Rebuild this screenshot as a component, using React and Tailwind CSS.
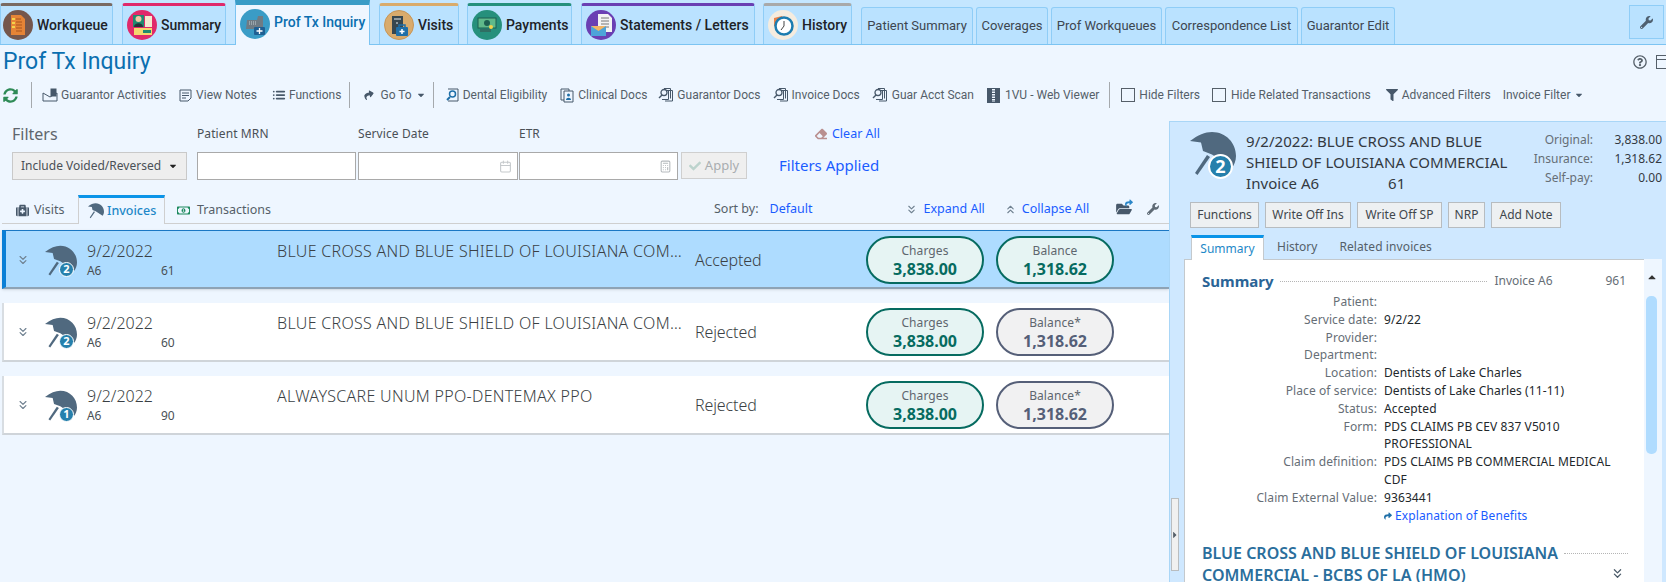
import { FaWrench, FaFilter, FaCaretDown, FaCaretUp, FaCaretRight, FaMedkit, FaRegMoneyBillAlt, FaCheck, FaRegQuestionCircle, FaShare, FaEraser, FaFolderOpen, FaSyncAlt } from 'react-icons/fa';
import { FiList } from 'react-icons/fi';
import { LuChevronsDown, LuChevronsUp, LuCalendar, LuCalculator } from 'react-icons/lu';

const segoe = "font-['Noto_Sans',sans-serif]";

const mainTabs = [
    { label: 'Workqueue', w: 'w-[113px]', ml: 'ml-0', pl: 'pl-[2px]', bar: 'border-t-[#7a6a62]', icon: 'wq' },
    { label: 'Summary', w: 'w-[104px]', ml: 'ml-[9px]', pl: 'pl-[4px]', bar: 'border-t-[#e0296b]', icon: 'sum' },
    { label: 'Visits', w: 'w-[80px]', ml: 'ml-[9px]', pl: 'pl-[4px]', bar: 'border-t-[#d9ab6c]', icon: 'vis' },
    { label: 'Payments', w: 'w-[105px]', ml: 'ml-[8px]', pl: 'pl-[4px]', bar: 'border-t-[#26907c]', icon: 'pay' },
    { label: 'Statements / Letters', w: 'w-[174px]', ml: 'ml-[9px]', pl: 'pl-[4px]', bar: 'border-t-[#6a3fb3]', icon: 'stm' },
    { label: 'History', w: 'w-[89px]', ml: 'ml-[8px]', pl: 'pl-[4px]', bar: 'border-t-[#a9a9a9]', icon: 'his' },
];

const subTabs = [
    { label: 'Patient Summary', w: 'w-[112px]' },
    { label: 'Coverages', w: 'w-[72px]' },
    { label: 'Prof Workqueues', w: 'w-[111px]' },
    { label: 'Correspondence List', w: 'w-[133px]' },
    { label: 'Guarantor Edit', w: 'w-[94px]' },
];

const details = [
    ['Patient:', ''],
    ['Service date:', '9/2/22'],
    ['Provider:', ''],
    ['Department:', ''],
    ['Location:', 'Dentists of Lake Charles'],
    ['Place of service:', 'Dentists of Lake Charles (11-11)'],
    ['Status:', 'Accepted'],
    ['Form:', 'PDS CLAIMS PB CEV 837 V5010 PROFESSIONAL'],
    ['Claim definition:', 'PDS CLAIMS PB COMMERCIAL MEDICAL CDF'],
    ['Claim External Value:', '9363441'],
];

const rows = [
    { num: '61', badge: '2', title: 'BLUE CROSS AND BLUE SHIELD OF LOUISIANA COMMERCIAL - BCBS OF LA (HMO)', status: 'Accepted', selected: true, balance: 'Balance' },
    { num: '60', badge: '2', title: 'BLUE CROSS AND BLUE SHIELD OF LOUISIANA COMMERCIAL - BCBS OF LA (HMO)', status: 'Rejected', balance: 'Balance*' },
    { num: '90', badge: '1', title: 'ALWAYSCARE UNUM PPO-DENTEMAX PPO', status: 'Rejected', balance: 'Balance*' },
];

const TabIcon = ({ kind }) => {
    if (kind === 'wq') return (
        <svg viewBox="0 0 30 30" className="w-[30px] h-[30px] shrink-0">
            <circle cx="15" cy="15" r="15" fill="#75574c" />
            <path d="M8 5h10l4 4v16H8z" fill="#e58436" />
            <path d="M13 9h5M13 12h6M13 15h6M13 18h6M13 21h6" stroke="#a8551c" strokeWidth="1" />
            <path d="M9 8h3v2H9zM9 12h3v2H9zM9 16h3v2H9z" fill="#f4d24a" />
        </svg>
    );
    if (kind === 'sum') return (
        <svg viewBox="0 0 30 30" className="w-[30px] h-[30px] shrink-0">
            <circle cx="15" cy="15" r="15" fill="#e0296b" />
            <rect x="6" y="5" width="11" height="12" fill="#1f8a70" />
            <circle cx="11.500" cy="9" r="3" fill="#f1c9a5" />
            <path d="M7 17c0-5 9-5 9 0z" fill="#263238" />
            <rect x="18" y="6" width="7" height="11" fill="#f4e9d0" />
            <rect x="7" y="18" width="18" height="7" fill="#f5d76e" />
            <rect x="16" y="20" width="8" height="3" fill="#1f8a70" />
        </svg>
    );
    if (kind === 'vis') return (
        <svg viewBox="0 0 30 30" className="w-[30px] h-[30px] shrink-0">
            <circle cx="15" cy="15" r="14.500" fill="#d9ab6c" stroke="#c79557" />
            <rect x="8" y="6" width="11" height="18" fill="#37474f" />
            <path d="M10 9h7M12 13h2" stroke="#eceff1" strokeWidth="1" />
            <rect x="12" y="17" width="12" height="9" rx="1" fill="#1f6fa8" />
            <path d="M15 17v-2h6v2" fill="none" stroke="#1f6fa8" strokeWidth="1.500" />
            <path d="M18 19v5M15.500 21.500h5" stroke="#fff" strokeWidth="1.500" />
        </svg>
    );
    if (kind === 'pay') return (
        <svg viewBox="0 0 30 30" className="w-[30px] h-[30px] shrink-0">
            <circle cx="15" cy="15" r="15" fill="#26907c" />
            <rect x="6" y="8" width="18" height="10" fill="#5fb98a" stroke="#1d5f50" />
            <circle cx="15" cy="13" r="3" fill="#1d5f50" />
            <rect x="8" y="19" width="11" height="3" fill="#2f6f63" />
            <circle cx="19" cy="17" r="2" fill="#f4d24a" />
        </svg>
    );
    if (kind === 'stm') return (
        <svg viewBox="0 0 30 30" className="w-[30px] h-[30px] shrink-0">
            <circle cx="15" cy="15" r="15" fill="#6a3fb3" />
            <path d="M12 4h10l4 4v14H12z" fill="#f3f3f3" />
            <path d="M15 8h8M15 11h8M15 14h8M15 17h8" stroke="#777" strokeWidth="1" />
            <rect x="5" y="16" width="15" height="10" fill="#4da3d9" />
            <path d="M5 16l7.500 5 7.500-5z" fill="#f3b565" />
        </svg>
    );
    if (kind === 'his') return (
        <svg viewBox="0 0 30 30" className="w-[30px] h-[30px] shrink-0">
            <circle cx="15" cy="15" r="15" fill="#f5ecdf" />
            <path d="M6 8l8-2 2 3-5 2v5H6z" fill="#e8824a" />
            <circle cx="16" cy="16" r="8.500" fill="#fff" stroke="#1c7cb0" strokeWidth="2.500" />
            <path d="M16 11v5l-3 4" fill="none" stroke="#444" strokeWidth="1" />
        </svg>
    );
    return (
        <svg viewBox="0 0 30 30" className="w-[30px] h-[30px] shrink-0">
            <circle cx="15" cy="15" r="15" fill="#3a9cc6" />
            <path d="M7 11h10l1-4h5v13H6z" fill="#6f7b84" />
            <path d="M9 13h7M9 15h7" stroke="#c6ced3" strokeWidth="1" strokeDasharray="1 1" />
            <rect x="14" y="18" width="11" height="8" rx="1" fill="#1f5f93" />
            <path d="M19.500 19v6M16.500 22h6" stroke="#fff" strokeWidth="1.300" />
        </svg>
    );
};

const UmbrellaShape = () => (
    <svg viewBox="0 0 46 46" className="w-full h-full">
        <path d="M0 10C8 4 15 1 22 1c14 0 24 11 24 24 0 5-2 9-4 12L22 23.500 13 20 11 11.500z" fill="#50697f" />
        <path d="M17 24L5 42l2.500 2L20 26z" fill="#50697f" />
    </svg>
);

const Umbrella = ({ badge, big }) => (
    <div className={big ? 'relative w-[46px] h-[46px] shrink-0' : 'relative w-[32px] h-[32px] shrink-0'}>
        <UmbrellaShape />
        <span className={big
            ? "absolute right-[3px] bottom-[-2px] w-[25px] h-[25px] rounded-full bg-[#2680ac] border-2 border-white text-white text-[18px] font-bold flex items-center justify-center font-['Noto_Sans',sans-serif]"
            : "absolute right-[3px] bottom-[0px] w-[15px] h-[15px] rounded-full bg-[#2680ac] border border-white text-white text-[11px] font-bold flex items-center justify-center font-['Noto_Sans',sans-serif]"}>
            {badge}
        </span>
    </div>
);

const DocSearch = () => (
    <svg viewBox="0 0 16 16" className="w-[16px] h-[16px] shrink-0" fill="none" stroke="#47586a" strokeWidth="1">
        <path d="M6 1.500h6.500v10M8 3.500h6.500V14H7" />
        <path d="M10.500 3v9.500H4" />
        <circle cx="6" cy="5.500" r="3" strokeWidth="1.300" />
        <path d="M4 8L1 11" strokeWidth="1.500" />
    </svg>
);

const ToolItem = ({ icon, children, className }) => (
    <div className={`flex items-center text-[12px] text-[#555f69] whitespace-nowrap ${className}`}>
        {icon}
        {children}
    </div>
);

const Sep = ({ className }) => <div className={`w-px h-[26px] bg-[#a5a9ad] ${className}`}></div>;

const Pill = ({ label, value, tone }) => (
    <div className={tone === 'green'
        ? 'w-[118px] h-[48px] rounded-[24px] border-2 border-[#066b60] bg-[#e6f4f3] flex flex-col items-center justify-center pt-[1px]'
        : 'w-[118px] h-[48px] rounded-[24px] border-2 border-[#555f78] bg-[#f1f1f2] flex flex-col items-center justify-center pt-[1px]'}>
        <span className="text-[12px] leading-[17px] text-[#5e666e] tracking-[0.1px]">{label}</span>
        <span className={tone === 'green'
            ? 'text-[16px] leading-[20px] font-bold text-[#066b60]'
            : 'text-[16px] leading-[20px] font-bold text-[#555f78]'}>{value}</span>
    </div>
);

const Row = ({ row }) => (
    <div className={row.selected
        ? 'h-[59px] flex bg-[#aedcff] border-l-[4px] border-l-[#0a7fd6] border-t border-t-[#1b78c4] border-b-[2px] border-b-[#8ea3b5] shadow-sm'
        : 'h-[59px] flex bg-white border-l-[2px] pl-[2px] border-l-[#d8dde2] border-b-[2px] border-b-[#cfd4d9]'}>
        <LuChevronsDown className="text-[#6f8090] w-[14px] h-[14px] ml-[10px] mt-[22px] shrink-0" />
        <div className="ml-[15px] mt-[14px] shrink-0"><Umbrella badge={row.badge} /></div>
        <div className="ml-[10px] w-[190px] shrink-0 pt-[9px]">
            <div className="text-[16px] leading-[22px] text-[#3a3f44] font-light">9/2/2022</div>
            <div className="flex text-[12px] leading-[16px] mt-[1px] text-[#4a5056] tracking-[-0.2px]">
                <span className="w-[74px]">A6</span><span>{row.num}</span>
            </div>
        </div>
        <div className="w-[414px] shrink-0 pt-[9px] text-[16px] leading-[22px] text-[#3a3f44] truncate tracking-[0.3px] font-light">{row.title}</div>
        <div className="w-[171px] shrink-0 ml-[4px] pt-[18px] text-[16px] leading-[22px] text-[#3a3f44] tracking-[-0.1px] font-light">{row.status}</div>
        <div className="flex gap-[12px] pt-[5px]">
            <Pill label="Charges" value="3,838.00" tone="green" />
            <Pill label={row.balance} value="1,318.62" tone={row.selected ? 'green' : 'gray'} />
        </div>
    </div>
);

const App = () => {
    return (
        <div className="w-[1666px] h-[582px] overflow-hidden bg-[#eef6ff] flex flex-col font-['Roboto',sans-serif]">
            {/* top tabs */}
            <div className="h-[45px] shrink-0 bg-[#c4e6ff] border-b border-b-[#7cc4f2] flex items-end relative">
                {mainTabs.slice(0, 2).map((t) => (
                    <div key={t.label} className={`${t.w} ${t.ml} ${t.pl} h-[41px] bg-[#bae2ff] border-t-[3px] ${t.bar} border-x border-x-[#8fcdf7] rounded-t-[3px] flex items-center gap-[4px] text-[14px] font-medium text-[#1e2328] whitespace-nowrap`}>
                        <TabIcon kind={t.icon} />{t.label}
                    </div>
                ))}
                <div className="w-[135px] ml-[9px] h-[45px] mb-[-1px] bg-[#eef6ff] border-t-[5px] border-t-[#3a9cc6] border-x border-x-[#7cc4f2] flex items-start pt-[4px] pl-[4px] gap-[4px] text-[14px] font-medium text-[#0b6fb0] whitespace-nowrap">
                    <TabIcon kind="prof" /><span className="mt-[3px]">Prof Tx Inquiry</span>
                </div>
                {mainTabs.slice(2).map((t) => (
                    <div key={t.label} className={`${t.w} ${t.ml} ${t.pl} h-[41px] bg-[#bae2ff] border-t-[3px] ${t.bar} border-x border-x-[#8fcdf7] rounded-t-[3px] flex items-center gap-[4px] text-[14px] font-medium text-[#1e2328] whitespace-nowrap`}>
                        <TabIcon kind={t.icon} />{t.label}
                    </div>
                ))}
                <div className="flex ml-[9px] gap-[3px]">
                    {subTabs.map((t) => (
                        <div key={t.label} className={`${t.w} h-[37px] bg-[#bae2ff] border-x border-t border-[#8fcdf7] rounded-t-[3px] flex items-center justify-center text-[13px] text-[#3d4650] whitespace-nowrap`}>
                            {t.label}
                        </div>
                    ))}
                </div>
                <div className="absolute right-[2px] top-[5px] w-[35px] h-[34px] bg-[#bae2ff] border border-[#8fcdf7] flex items-center justify-center">
                    <FaWrench className="w-[13px] h-[13px] text-[#4f6070]" />
                </div>
            </div>

            {/* title */}
            <div className="h-[33px] shrink-0 flex items-center pl-[3px] pt-[1px] overflow-hidden">
                <div className="text-[23px] text-[#0b6fb0]">Prof Tx Inquiry</div>
                <div className="ml-auto flex items-center gap-[9px] mr-[-4px]">
                    <FaRegQuestionCircle className="w-[14px] h-[14px] text-[#555f69]" />
                    <div className="w-[14px] h-[14px] border border-[#555f69] pt-[3px]"><div className="border-t border-t-[#555f69]"></div></div>
                </div>
            </div>

            {/* toolbar */}
            <div className="h-[34px] shrink-0 flex items-center">
                <FaSyncAlt className="w-[15px] h-[15px] ml-[3px] text-[#2e8b57]" />
                <Sep className="ml-[13px]" />
                <ToolItem className="ml-[10px]" icon={<svg viewBox="0 0 16 14" className="w-[16px] h-[14px] mr-[3px]" fill="none" stroke="#47586a"><path d="M1 5l7 4 7-4v8H1z" /><rect x="9" y="1" width="5" height="7" fill="#47586a" /></svg>}>Guarantor Activities</ToolItem>
                <ToolItem className="ml-[13px]" icon={<svg viewBox="0 0 13 13" className="w-[13px] h-[13px] mr-[4px]" fill="none" stroke="#47586a"><path d="M1 1h11v8l-3 3H1zM3 4h7M3 6.500h7M3 9h4" /></svg>}>View Notes</ToolItem>
                <ToolItem className="ml-[15px]" icon={<FiList className="w-[14px] h-[14px] mr-[3px] text-[#47586a] stroke-[3]" />}>Functions</ToolItem>
                <Sep className="ml-[8px]" />
                <ToolItem className="ml-[14px]" icon={<FaShare className="w-[10px] h-[10px] mr-[6px] text-[#47586a] -rotate-12" />}>Go To<FaCaretDown className="w-[10px] h-[10px] ml-[4px] text-[#47586a]" /></ToolItem>
                <Sep className="ml-[7px]" />
                <ToolItem className="ml-[11px]" icon={<svg viewBox="0 0 14 14" className="w-[14px] h-[14px] mr-[4px]" fill="none" stroke="#47586a"><path d="M3 1h10v12H3" /><circle cx="7.500" cy="6" r="3" stroke="#1f6fa8" strokeWidth="1.500" /><path d="M5 9l-3 3" stroke="#1f6fa8" strokeWidth="2" /></svg>}>Dental Eligibility</ToolItem>
                <ToolItem className="ml-[13px]" icon={<svg viewBox="0 0 14 15" className="w-[14px] h-[15px] mr-[4px]" fill="none" stroke="#47586a"><path d="M1 1h8v11H1z" /><path d="M4 3h9v11H4z" fill="#eef6ff" /><circle cx="8.500" cy="7" r="1.500" fill="#1f6fa8" stroke="none" /><path d="M6 12c0-3 5-3 5 0z" fill="#1f6fa8" stroke="none" /></svg>}>Clinical Docs</ToolItem>
                <ToolItem className="ml-[11px]" icon={<span className="mr-[3px]"><DocSearch /></span>}>Guarantor Docs</ToolItem>
                <ToolItem className="ml-[12px]" icon={<span className="mr-[3px]"><DocSearch /></span>}>Invoice Docs</ToolItem>
                <ToolItem className="ml-[12px]" icon={<span className="mr-[4px]"><DocSearch /></span>}>Guar Acct Scan</ToolItem>
                <ToolItem className="ml-[13px]" icon={<svg viewBox="0 0 13 15" className="w-[13px] h-[15px] mr-[5px]"><rect width="13" height="15" fill="#47586a" /><path d="M6.500 1v13" stroke="#eef6ff" strokeWidth="3" strokeDasharray="1.500 1" /></svg>}>1VU - Web Viewer</ToolItem>
                <Sep className="ml-[10px]" />
                <ToolItem className="ml-[11px]" icon={<span className="w-[14px] h-[14px] border border-[#555f69] mr-[4px]"></span>}>Hide Filters</ToolItem>
                <ToolItem className="ml-[12px]" icon={<span className="w-[14px] h-[14px] border border-[#555f69] mr-[5px]"></span>}>Hide Related Transactions</ToolItem>
                <ToolItem className="ml-[15px]" icon={<FaFilter className="w-[12px] h-[12px] mr-[4px] text-[#47586a]" />}>Advanced Filters</ToolItem>
                <ToolItem className="ml-[12px]" icon={null}>Invoice Filter<FaCaretDown className="w-[10px] h-[10px] ml-[4px] text-[#47586a]" /></ToolItem>
            </div>

            {/* main */}
            <div className={`flex-1 flex min-h-0 ${segoe}`}>
                <div className="w-[1169px] shrink-0 flex flex-col">
                    {/* filters */}
                    <div className="flex pl-[12px] pt-[11px]">
                        <div className="w-[175px] shrink-0">
                            <div className="h-[22px] flex items-center text-[16px] text-[#5f666d]">Filters</div>
                            <div className="mt-[7px] h-[28px] bg-[#eeeeee] border border-[#c9c9c9] flex items-center px-[8px] text-[12px] text-[#4a5056] whitespace-nowrap">
                                Include Voided/Reversed
                                <FaCaretDown className="w-[10px] h-[10px] ml-auto text-[#222]" />
                            </div>
                        </div>
                        <div className="w-[159px] ml-[10px] shrink-0">
                            <div className="h-[22px] flex items-center text-[12px] text-[#4a5056] tracking-[0.1px]">Patient MRN</div>
                            <div className="mt-[7px] h-[28px] bg-white border border-[#a9a9a9]"></div>
                        </div>
                        <div className="w-[160px] ml-[2px] shrink-0">
                            <div className="h-[22px] flex items-center text-[12px] text-[#4a5056] tracking-[0.1px]">Service Date</div>
                            <div className="mt-[7px] h-[28px] bg-white border border-[#a9a9a9] flex items-center justify-end pr-[5px]">
                                <LuCalendar className="w-[13px] h-[13px] text-[#c5c9cc]" />
                            </div>
                        </div>
                        <div className="w-[159px] ml-[1px] shrink-0">
                            <div className="h-[22px] flex items-center text-[12px] text-[#4a5056]">ETR</div>
                            <div className="mt-[7px] h-[28px] bg-white border border-[#a9a9a9] flex items-center justify-end pr-[5px]">
                                <LuCalculator className="w-[13px] h-[13px] text-[#b5babd]" />
                            </div>
                        </div>
                        <div className="w-[66px] ml-[3px] mt-[29px] h-[27px] bg-[#efefef] border border-[#cfcfcf] flex items-center justify-center gap-[4px] text-[13px] text-[#a9adb0] shrink-0">
                            <FaCheck className="w-[12px] h-[12px] text-[#bcd3cd]" /><span>Apply</span>
                        </div>
                        <div className="w-[101px] ml-[32px] shrink-0">
                            <div className="h-[22px] flex items-center justify-end gap-[5px] text-[12.5px] text-[#1a5cff]">
                                <FaEraser className="w-[12px] h-[12px] text-[#b98f8f]" />Clear All
                            </div>
                            <div className="mt-[10px] text-[15px] leading-[20px] text-[#1a5cff] whitespace-nowrap">Filters Applied</div>
                        </div>
                    </div>

                    {/* list tabs */}
                    <div className="mt-[15px] ml-[2px] h-[29px] shrink-0 flex items-stretch border-b border-b-[#cfcfcf]">
                        <div className="flex items-center pl-[13px] w-[76px] gap-[4px] text-[12.5px] text-[#555f69] pt-[2px]">
                            <FaMedkit className="w-[15px] h-[13px] text-[#47586a]" />Visits
                        </div>
                        <div className="w-[87px] mb-[-1px] bg-[#eef6ff] border-t-[3px] border-t-[#0a94e8] border-x border-x-[#cfcfcf] flex items-center pl-[9px] gap-[3px] text-[12.5px] font-medium text-[#1e88c8]">
                            <span className="w-[16px] h-[16px]"><UmbrellaShape /></span>Invoices
                        </div>
                        <div className="flex items-center pl-[12px] w-[120px] gap-[7px] text-[12.5px] text-[#555f69] whitespace-nowrap pt-[2px]">
                            <FaRegMoneyBillAlt className="w-[13px] h-[13px] text-[#1d8a5e]" />Transactions
                        </div>
                        <div className="flex items-center text-[12.5px] ml-[429px] whitespace-nowrap">
                            <span className="text-[#555f69]">Sort by:</span>
                            <span className="ml-[11px] text-[#1a5cff]">Default</span>
                            <LuChevronsDown className="ml-[93px] w-[13px] h-[13px] text-[#6f8090]" />
                            <span className="ml-[5px] text-[#1a5cff]">Expand All</span>
                            <LuChevronsUp className="ml-[19px] w-[13px] h-[13px] text-[#6f8090]" />
                            <span className="ml-[5px] text-[#1a5cff]">Collapse All</span>
                            <span className="ml-[27px] relative">
                                <FaFolderOpen className="w-[16px] h-[14px] text-[#47586a]" />
                                <FaShare className="absolute right-[-1px] top-[-3px] w-[8px] h-[8px] text-[#2a86c8]" />
                            </span>
                            <FaWrench className="ml-[15px] w-[12px] h-[12px] text-[#5f6b76]" />
                        </div>
                    </div>

                    {/* rows */}
                    <div className="ml-[2px] mt-[6px] flex flex-col gap-[14px]">
                        {rows.map((r) => <Row key={r.num} row={r} />)}
                    </div>
                </div>

                {/* detail panel */}
                <div className="mt-[9px] flex-1 min-w-0 bg-[#cfe8ff] border-t border-l border-[#a9d6f7] flex flex-col relative">
                    <div className="flex pl-[20px] pt-[9px]">
                        <Umbrella badge="2" big />
                        <div className="ml-[10px] w-[270px] text-[15px] leading-[21px] text-[#33393f] shrink-0 tracking-[0.05px]">
                            <div>9/2/2022: BLUE CROSS AND BLUE</div>
                            <div className="whitespace-nowrap">SHIELD OF LOUISIANA COMMERCIAL</div>
                            <div className="flex"><span className="w-[142px]">Invoice A6</span><span>61</span></div>
                        </div>
                        <div className="ml-auto mr-[4px] self-start text-[12px] leading-[19px] mt-[-1px] grid grid-cols-[auto_69px]">
                            <span className="text-right text-[#666e76]">Original:</span><span className="text-right text-[#33393f]">3,838.00</span>
                            <span className="text-right text-[#666e76]">Insurance:</span><span className="text-right text-[#33393f]">1,318.62</span>
                            <span className="text-right text-[#666e76]">Self-pay:</span><span className="text-right text-[#33393f]">0.00</span>
                        </div>
                    </div>
                    <div className="flex gap-[6px] pl-[20px] mt-[8px]">
                        <div className="w-[69px] h-[26px] bg-[#edf0f2] border border-[#b7bcc0] flex items-center justify-center text-[12px] text-[#40464c]">Functions</div>
                        <div className="w-[86px] h-[26px] bg-[#edf0f2] border border-[#b7bcc0] flex items-center justify-center text-[12px] text-[#40464c]">Write Off Ins</div>
                        <div className="w-[85px] h-[26px] bg-[#edf0f2] border border-[#b7bcc0] flex items-center justify-center text-[12px] text-[#40464c]">Write Off SP</div>
                        <div className="w-[37px] h-[26px] bg-[#edf0f2] border border-[#b7bcc0] flex items-center justify-center text-[12px] text-[#40464c]">NRP</div>
                        <div className="w-[70px] h-[26px] bg-[#edf0f2] border border-[#b7bcc0] flex items-center justify-center text-[12px] text-[#40464c]">Add Note</div>
                    </div>
                    <div className="flex pl-[21px] mt-[7px] h-[24px] text-[12px] shrink-0 relative z-10">
                        <div className="w-[73px] h-[25px] bg-white border-t-[3px] border-t-[#0a94e8] border-x border-x-[#c4c9cd] flex items-center justify-center text-[#1e88c8]">Summary</div>
                        <div className="ml-[13px] flex items-center text-[#555f69]">History</div>
                        <div className="ml-[22px] flex items-center text-[#555f69] tracking-[0.1px]">Related invoices</div>
                    </div>
                    <div className="flex flex-1 min-h-0 ml-[14px] mr-[4px]">
                        <div className="w-[460px] shrink-0 bg-white border-t border-l border-[#c4c9cd] pl-[17px] pr-[16px] pt-[10px] overflow-hidden">
                            <div className="flex items-center h-[22px]">
                                <span className="text-[15px] font-bold text-[#2a6496]">Summary</span>
                                <span className="flex-1 ml-[6px] border-t border-dotted border-t-[#b5b5b5]"></span>
                                <span className="ml-[7px] w-[111px] text-[12px] text-[#666e76]">Invoice A6</span>
                                <span className="text-[12px] text-[#666e76] mr-[2px]">961</span>
                            </div>
                            <div className="mt-[1px] flex flex-col">
                                {details.map(([k, v]) => (
                                    <div key={k} className="flex text-[12px] leading-[17.8px] tracking-[0.1px]">
                                        <span className="w-[175px] shrink-0 text-right text-[#666e76]">{k}</span>
                                        <span className="ml-[7px] text-[#22272b]">{v}</span>
                                    </div>
                                ))}
                                <div className="flex text-[12px] leading-[18px] pl-[182px] items-center text-[#1a5cff] tracking-[0.1px]">
                                    <FaShare className="w-[8px] h-[8px] mr-[3px] text-[#1f6fa8]" />Explanation of Benefits
                                </div>
                            </div>
                            <div className="mt-[17px] relative">
                                <div className="text-[16px] leading-[22px] font-semibold text-[#2a6e9c] w-[420px]">
                                    BLUE CROSS AND BLUE SHIELD OF LOUISIANA COMMERCIAL - BCBS OF LA (HMO)
                                </div>
                                <div className="absolute left-[362px] right-0 top-[11px] border-t border-dotted border-t-[#b5b5b5]"></div>
                                <LuChevronsDown className="absolute right-[3px] top-[24px] w-[15px] h-[15px] text-[#4a5a68]" />
                            </div>
                        </div>
                        <div className="flex-1 bg-[#eef6ff] flex flex-col items-center relative">
                            <FaCaretUp className="w-[12px] h-[12px] mt-[12px] ml-[-2px] text-[#333]" />
                            <div className="w-[11px] h-[158px] mt-[13px] ml-[-4px] rounded-[5px] bg-[#b0dcff]"></div>
                        </div>
                    </div>
                    <div className="absolute left-[1px] top-[376px] w-[8px] h-[73px] bg-[#f0f0f0] border border-[#b9bdc0] flex items-center justify-center">
                        <FaCaretRight className="w-[10px] h-[10px] shrink-0 text-[#555f69]" />
                    </div>
                </div>
            </div>
        </div>
    );
};

export default App;
